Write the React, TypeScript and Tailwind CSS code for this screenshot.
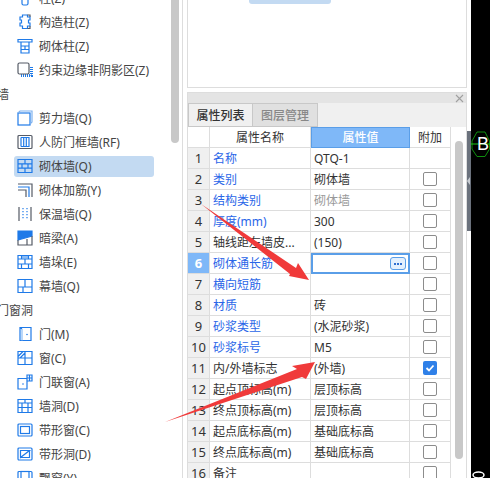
const font = "font-['Noto_Sans','Noto_Sans_CJK_SC',sans-serif]";

const B = '#1f7ae8';
const G = '#555b66';

function Icon({ name }: { name: string }) {
  const common = { fill: 'none', strokeWidth: 1.2, stroke: B };
  return (
    <svg width="16" height="16" viewBox="0 0 16 16" className="shrink-0" {...common}>
      {name === 'zhu' && <rect x="5" y="1" width="6" height="14" rx="1.5" />}
      {name === 'gzz' && (
        <>
          <path d="M5.500 1h5v2h2.500v3h-1.500v3h1.500v3h-2.500v2.500h-5V12H3V9h1.500V6H3V3h2.500z" />
          <path d="M10.500 1H13v2M13 12v2.500h-2.500" stroke={G} />
        </>
      )}
      {name === 'qtz' && <path d="M1 1.500h14v2.500H1zM4 4v11h8V4M4 8h8M4 11.500h8M8 8v3.500" />}
      {name === 'yueshu' && (
        <>
          <path d="M4 13.500h10.500V5" stroke={B} strokeWidth="3" strokeDasharray="1 1" />
          <rect x="1" y="1" width="11" height="11" rx="1.500" stroke={G} fill="white" />
        </>
      )}
      {name === 'jlq' && (
        <>
          <rect x="1" y="3" width="12" height="12" />
          <path d="M1 3l2-2h12v11l-2 2" stroke="#7fb2ef" />
        </>
      )}
      {name === 'rf' && (
        <>
          <rect x="1" y="1.500" width="14" height="13" rx="1" stroke={G} />
          <path d="M4 3.500v9M4 3.500h8v9H4M6.700 3.500v9M9.300 3.500v9" />
        </>
      )}
      {name === 'qtq' && (
        <path d="M1 1.500h14v13H1zM1 5.800h14M1 10.200h14M8 1.500v4.300M5 5.800v4.400M11 5.800v4.400M8 10.200v4.300" />
      )}
      {name === 'jj' && (
        <>
          <path d="M1 2h14v13" stroke={G} />
          <path d="M1 5h11v10" />
          <path d="M1 8h8v7" stroke={G} />
        </>
      )}
      {name === 'bw' && (
        <>
          <path d="M2 1v14M14 1v14" stroke={G} />
          <path d="M6 2v12M10 2v12" stroke={B} strokeDasharray="1.300 1.700" />
        </>
      )}
      {name === 'al' && (
        <>
          <path d="M1 1h14v5L1 10z" fill={B} />
          <path d="M1 10v5h14V6" stroke={G} />
          <path d="M10 15V9" stroke={G} />
        </>
      )}
      {name === 'qd' && (
        <>
          <path d="M4 1.500h8v3H4z" fill="#8dbcf3" stroke="none" />
          <path d="M1 1.500h14v13H1zM1 5h14M1 10h14M4.500 1.500V5M11.500 1.500V5M8 5v5M4.500 10v4.500M11.500 10v4.500" />
        </>
      )}
      {name === 'mq' && <path d="M1 1.500h14v13H1zM1 9h14M8 1.500V9M6 9v5.500" />}
      {name === 'men' && (
        <>
          <path d="M3 1.500h11v13H3zM3 1.500l2 1.500" />
          <path d="M5 3v11.500" stroke="#8dbcf3" />
          <circle cx="10" cy="8.500" r=".8" fill={B} stroke="none" />
        </>
      )}
      {name === 'chuang' && <path d="M1 1.500h14v13H1zM1 8h14M8 1.500v13M1 6.500l5-5M3 8l5-5" />}
      {name === 'mlc' && (
        <>
          <path d="M1 4.500h9v10.500H1zM10 1h5v6h-5zM10 4h5M12.500 1v6" />
          <circle cx="6" cy="10" r=".8" fill={B} stroke="none" />
        </>
      )}
      {name === 'qdong' && (
        <path d="M1 1.500h14v13H1zM1 5h14M5 5v9.500M11 5v9.500M5 9.500h6M8 1.500V5M1 9.500h4M11 9.500h4" />
      )}
      {name === 'dxc' && (
        <>
          <rect x="1" y="2" width="14" height="12" rx="1" />
          <rect x="3.500" y="4.500" width="9" height="7" />
        </>
      )}
      {name === 'dxd' && (
        <>
          <rect x="1" y="2" width="14" height="12" rx="1" />
          <path d="M3.500 11.500v-7h9zM3.500 11.500h9v-7" />
        </>
      )}
      {name === 'pc' && (
        <>
          <rect x="1" y="1.500" width="14" height="13" rx="1" />
          <rect x="4" y="1.500" width="8" height="10" />
        </>
      )}
    </svg>
  );
}

const listItems = [
  { icon: 'zhu', label: '柱(Z)' },
  { icon: 'gzz', label: '构造柱(Z)' },
  { icon: 'qtz', label: '砌体柱(Z)' },
  { icon: 'yueshu', label: '约束边缘非阴影区(Z)' },
  { heading: '墙' },
  { icon: 'jlq', label: '剪力墙(Q)' },
  { icon: 'rf', label: '人防门框墙(RF)' },
  { icon: 'qtq', label: '砌体墙(Q)', active: true },
  { icon: 'jj', label: '砌体加筋(Y)' },
  { icon: 'bw', label: '保温墙(Q)' },
  { icon: 'al', label: '暗梁(A)' },
  { icon: 'qd', label: '墙垛(E)' },
  { icon: 'mq', label: '幕墙(Q)' },
  { heading: '门窗洞' },
  { icon: 'men', label: '门(M)' },
  { icon: 'chuang', label: '窗(C)' },
  { icon: 'mlc', label: '门联窗(A)' },
  { icon: 'qdong', label: '墙洞(D)' },
  { icon: 'dxc', label: '带形窗(C)' },
  { icon: 'dxd', label: '带形洞(D)' },
  { icon: 'pc', label: '飘窗(Y)' },
];

const rows = [
  { name: '名称', value: 'QTQ-1', blue: true, noCheck: true },
  { name: '类别', value: '砌体墙', blue: true },
  { name: '结构类别', value: '砌体墙', blue: true, muted: true },
  { name: '厚度(mm)', value: '300', blue: true },
  { name: '轴线距左墙皮...', value: '(150)' },
  { name: '砌体通长筋', value: '', blue: true, editing: true },
  { name: '横向短筋', value: '', blue: true },
  { name: '材质', value: '砖', blue: true },
  { name: '砂浆类型', value: '(水泥砂浆)', blue: true },
  { name: '砂浆标号', value: 'M5', blue: true },
  { name: '内/外墙标志', value: '(外墙)', checked: true },
  { name: '起点顶标高(m)', value: '层顶标高' },
  { name: '终点顶标高(m)', value: '层顶标高' },
  { name: '起点底标高(m)', value: '基础底标高' },
  { name: '终点底标高(m)', value: '基础底标高' },
  { name: '备注', value: '' },
];

function Checkbox({ checked }: { checked?: boolean }) {
  if (checked) {
    return (
      <div className="flex h-[14px] w-[14px] items-center justify-center rounded-[2px] bg-[#2f80e8]">
        <svg width="10" height="10" viewBox="0 0 10 10" fill="none" stroke="white" strokeWidth="1.800">
          <path d="M1.500 5l2.500 2.500 4.500-5" />
        </svg>
      </div>
    );
  }
  return <div className="h-[14px] w-[14px] rounded-[2px] border border-[#8c8c8c] bg-white" />;
}

function PropertyTable() {
  const cell = 'h-[21px] border-b border-r border-[#dddddd] flex items-center';
  return (
    <div className="grid w-[263px] grid-cols-[22px_101px_99px_41px] text-[12px] text-[#333333]">
      <div className={cell} />
      <div className={`${cell} justify-center pt-px`}>属性名称</div>
      <div className="flex h-[21px] items-center justify-center border border-[#5a9ee8] bg-[#7fb8f8] pt-px font-medium text-white">属性值</div>
      <div className={`${cell} justify-center pt-px`}>附加</div>
      {rows.map((row, i) => (
        <div key={i} className="contents">
          <div
            className={`${cell} justify-center pt-px text-[13px] ${
              row.editing ? 'bg-[#7fb8f8] font-bold text-white' : 'bg-[#f0f0f0]'
            }`}
          >
            {i + 1}
          </div>
          <div className={`${cell} pl-[3px] pt-px ${row.blue ? 'text-[#2a66e8]' : ''}`}>{row.name}</div>
          {row.editing ? (
            <div className="flex h-[21px] items-center justify-end border-2 border-[#5a9ee8] pr-[2px]">
              <div className="flex h-[13px] w-[16px] items-center justify-center gap-[1px] rounded-[3px] border border-[#5a9ee8] bg-[#e4f0fd]">
                <span className="h-[2px] w-[2px] bg-[#2f6fd0]" />
                <span className="h-[2px] w-[2px] bg-[#2f6fd0]" />
                <span className="h-[2px] w-[2px] bg-[#2f6fd0]" />
              </div>
            </div>
          ) : (
            <div className={`${cell} pl-[3px] pt-px ${row.muted ? 'text-[#999999]' : ''}`}>{row.value}</div>
          )}
          <div className={`${cell} justify-center`}>
            {!row.noCheck && <Checkbox checked={row.checked} />}
          </div>
        </div>
      ))}
    </div>
  );
}

export default function App() {
  return (
    <div className={`relative flex h-[478px] w-[490px] overflow-hidden bg-white ${font}`}>
      {/* component tree */}
      <div className="flex h-full w-[183px] shrink-0 border-r border-[#dddddd]">
        <div className="-mt-[14px] w-[171px] shrink-0 text-[12px] text-[#444444]">
          {listItems.map((item, i) =>
            item.heading ? (
              <div key={i} className="-ml-[3px] flex h-6 items-center pt-px">
                {item.heading}
              </div>
            ) : (
              <div key={i} className="flex h-6 items-center pl-[14px]">
                <div
                  className={`flex h-[21px] w-[140px] items-center gap-[6px] rounded-[3px] pl-[3px] ${
                    item.active ? 'bg-[#c3daf2]' : ''
                  }`}
                >
                  <Icon name={item.icon as string} />
                  <span className="whitespace-nowrap pt-px">{item.label}</span>
                </div>
              </div>
            ),
          )}
        </div>
        <div className="h-[143px] w-2 rounded-b-[4px] bg-[#c8c8c8]" />
      </div>

      {/* property panels */}
      <div className="flex h-full w-[284px] shrink-0 flex-col pl-1">
        <div className="h-[88px] w-[280px] shrink-0 border border-t-0 border-[#dddddd]">
          <div className="ml-[61px] h-1 w-[82px] rounded-b-[3px] bg-[#c3daf2]" />
        </div>
        <div className="mt-1 flex w-[280px] flex-col border border-[#dddddd]">
          <div className="flex h-[10px] items-center justify-end bg-[#e4e4e4] pr-[2px]">
            <svg width="9" height="9" viewBox="0 0 9 9" stroke="#a0a0a0" strokeWidth="1.100">
              <path d="M1 1l7 7M8 1L1 8" />
            </svg>
          </div>
          <div className="flex h-[24px] bg-[#f0f0f0] text-[12px]">
            <div className="flex h-full w-[65px] items-center justify-center border-x border-y border-[#c8c8c8] pt-px font-medium text-[#333333]">
              属性列表
            </div>
            <div className="flex h-full w-[65px] items-center justify-center border border-l-0 border-[#c8c8c8] bg-[#e0e0e0] pt-px font-medium text-[#888888]">
              图层管理
            </div>
          </div>
          <div className="flex">
            <PropertyTable />
            <div className="pl-1 pt-[14px]">
              <div className="h-[318px] w-2 rounded-[4px] bg-[#c8c8c8]" />
            </div>
          </div>
        </div>
      </div>

      {/* side handle */}
      <div className="mt-[131px] flex h-[100px] w-1 shrink-0 items-center bg-[#6b727d]">
        <div className="h-0 w-0 border-y-[4px] border-r-[3px] border-y-transparent border-r-[#c8ccd2]" />
      </div>

      {/* drawing canvas */}
      <div className="relative h-full flex-1 bg-black">
        <svg width="19" height="478" viewBox="0 0 19 478" fill="none">
          <path d="M6 132h8l4.500 9v8l-4.500 7.500h-8l-5-7.500v-8z" stroke="#0f8f0f" />
          <path d="M0 144h19" stroke="#19c819" />
          <ellipse cx="7.500" cy="475" rx="5.500" ry="3" stroke="white" strokeWidth="1.500" />
        </svg>
        <span className="absolute left-[6px] top-[135px] font-['Liberation_Sans',sans-serif] text-[18px] leading-[19px] text-white">B</span>
      </div>

      {/* red annotation arrows */}
      <svg className="pointer-events-none absolute left-0 top-0" width="490" height="478" fill="#f03a3a">
        <polygon points="201,204 296,268 298,263 309,280 289,276 290,274" />
        <polygon points="165,422 297,369 292,366 315,362 306,379 302,377" />
      </svg>
    </div>
  );
}
